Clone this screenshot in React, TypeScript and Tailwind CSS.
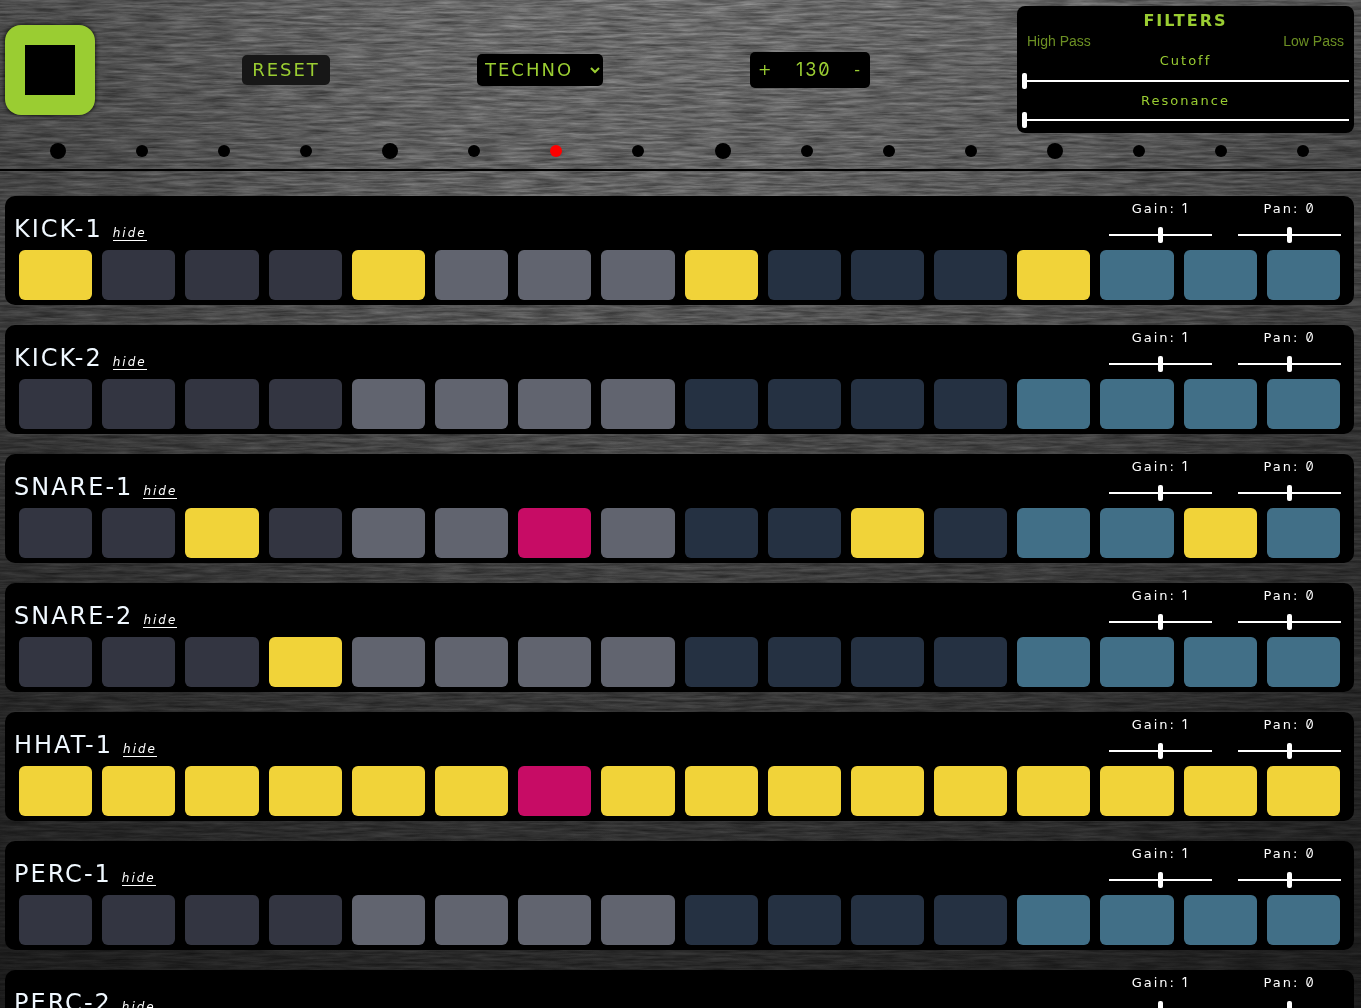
import { useState } from 'react';

type Track = { name: string; hits: number[] };

const STEPS = 16;
const CURRENT_STEP = 6;
const ALL_STEPS = Array.from({ length: STEPS }, (_, i) => i);

const TRACKS: Track[] = [
  { name: 'KICK-1', hits: [0, 4, 8, 12] },
  { name: 'KICK-2', hits: [] },
  { name: 'SNARE-1', hits: [2, 6, 10, 14] },
  { name: 'SNARE-2', hits: [3] },
  { name: 'HHAT-1', hits: ALL_STEPS },
  { name: 'PERC-1', hits: [] },
  { name: 'PERC-2', hits: [] },
];

const GROUP_COLORS = ['bg-[#333541]', 'bg-[#61646f]', 'bg-[#253142]', 'bg-[#416f87]'];

const SLIDER =
  'block h-0.5 w-full cursor-pointer appearance-none bg-white [&::-webkit-slider-thumb]:h-4 [&::-webkit-slider-thumb]:w-[5px] [&::-webkit-slider-thumb]:appearance-none [&::-webkit-slider-thumb]:rounded-xs [&::-webkit-slider-thumb]:bg-white';

/* Brushed metal: horizontally stretched noise, lit from the top centre. */
function BrushedMetal() {
  return (
    <svg className="fixed inset-0 -z-10 h-full w-full" aria-hidden="true">
      <defs>
        <filter id="grain" x="0" y="0" width="100%" height="100%" colorInterpolationFilters="sRGB">
          <feTurbulence type="fractalNoise" baseFrequency="0.03 0.36" numOctaves="4" seed="8" />
          <feColorMatrix values="0.4 0 0 0 0.22  0.4 0 0 0 0.22  0.4 0 0 0 0.22  0 0 0 0 1" />
        </filter>
        <linearGradient id="fade" x1="0" y1="0" x2="0" y2="1">
          <stop offset="0" stopColor="#000" stopOpacity="0" />
          <stop offset="0.2" stopColor="#000" stopOpacity="0.1" />
          <stop offset="0.45" stopColor="#000" stopOpacity="0.34" />
          <stop offset="0.7" stopColor="#000" stopOpacity="0.48" />
          <stop offset="1" stopColor="#000" stopOpacity="0.64" />
        </linearGradient>
        <linearGradient id="edges" x1="0" y1="0" x2="1" y2="0">
          <stop offset="0" stopColor="#000" stopOpacity="0.3" />
          <stop offset="0.3" stopColor="#000" stopOpacity="0.04" />
          <stop offset="0.5" stopColor="#000" stopOpacity="0" />
          <stop offset="0.75" stopColor="#000" stopOpacity="0.08" />
          <stop offset="1" stopColor="#000" stopOpacity="0.3" />
        </linearGradient>
      </defs>
      <rect width="100%" height="100%" filter="url(#grain)" />
      <rect width="100%" height="100%" fill="url(#fade)" />
      <rect width="100%" height="100%" fill="url(#edges)" />
    </svg>
  );
}

function FilterPanel() {
  return (
    <section className="w-[337px] rounded-lg bg-black px-[5px] pt-1.5 pb-3">
      <h2 className="text-center text-base leading-[18px] font-bold tracking-[2px]">FILTERS</h2>
      <div className="flex justify-between px-[5px] font-['Liberation_Sans',sans-serif] text-sm leading-[22px] text-[#6c9023]">
        <button type="button">High Pass</button>
        <button type="button">Low Pass</button>
      </div>
      <label className="block">
        <span className="block text-center text-[13px] leading-[18px] tracking-[2px]">Cutoff</span>
        <input type="range" min={0} max={100} defaultValue={0} className={`mt-2.5 ${SLIDER}`} />
      </label>
      <label className="mt-2.5 block">
        <span className="block text-center text-[13px] leading-[18px] tracking-[2px]">Resonance</span>
        <input type="range" min={0} max={100} defaultValue={0} className={`mt-[9px] ${SLIDER}`} />
      </label>
    </section>
  );
}

function Knob({ label, value, min, max }: { label: string; value: number; min: number; max: number }) {
  const [level, setLevel] = useState(value);
  return (
    <label className="block w-[129px] px-[13px] pt-1">
      <span className="block text-center text-[13px] leading-[18px] tracking-[2px]">
        {label}: <span className="font-[Inter,sans-serif] leading-none slashed-zero">{level}</span>
      </span>
      <input
        type="range"
        min={min}
        max={max}
        step={0.1}
        value={level}
        onChange={(e) => setLevel(Number(e.target.value))}
        className={`mt-4 ${SLIDER}`}
      />
    </label>
  );
}

function TrackCard({ name, hits }: Track) {
  const [active, setActive] = useState(hits);
  const toggle = (step: number) =>
    setActive((list) => (list.includes(step) ? list.filter((s) => s !== step) : [...list, step]));

  const padColor = (step: number) => {
    if (!active.includes(step)) return GROUP_COLORS[Math.floor(step / 4)];
    return step === CURRENT_STEP ? 'bg-[#c70c65]' : 'bg-[#f1d339]';
  };

  return (
    <section className="rounded-[10px] bg-black pb-[5px] text-white">
      <div className="flex h-[54px] justify-between">
        <div className="flex items-baseline gap-2.5 pt-[19px] pl-[9px]">
          <h2 className="text-[24px] leading-7 tracking-[2px] text-[aliceblue]">{name}</h2>
          <button type="button" className="border-b border-white text-xs leading-[14px] tracking-[2px] italic">
            hide
          </button>
        </div>
        <div className="flex">
          <Knob label="Gain" value={1} min={0} max={2} />
          <Knob label="Pan" value={0} min={-1} max={1} />
        </div>
      </div>
      <div className="grid grid-cols-16 gap-2.5 px-3.5">
        {ALL_STEPS.map((step) => (
          <button
            key={step}
            type="button"
            aria-label={`${name} step ${step + 1}`}
            aria-pressed={active.includes(step)}
            onClick={() => toggle(step)}
            className={`h-[50px] rounded-md ${padColor(step)}`}
          />
        ))}
      </div>
    </section>
  );
}

export default function App() {
  const [tempo, setTempo] = useState(130);
  return (
    <div className="relative isolate min-h-screen bg-[#333] pb-5 font-['DejaVu_Sans',sans-serif] text-[#9acd32]">
      <BrushedMetal />
      <header className="border-b-2 border-black pt-1.5 pb-2.5">
        <div className="flex items-center justify-between pr-[7px] pl-[5px]">
          <button
            type="button"
            aria-label="Stop"
            className="flex size-[90px] items-center justify-center rounded-2xl bg-[#9acd32] shadow-[0_0_5px_#000]"
          >
            <span className="size-[50px] bg-black" />
          </button>
          <button type="button" className="h-[30px] w-[88px] rounded-[5px] bg-[#171717] text-center text-lg leading-[30px] tracking-[2px]">
            RESET
          </button>
          <select
            aria-label="Kit"
            defaultValue="TECHNO"
            className="h-8 w-[126px] rounded-[5px] bg-black px-1 text-lg tracking-[2px]"
          >
            <option>TECHNO</option>
            <option>HOUSE</option>
          </select>
          <div className="flex h-9 w-[120px] items-center justify-between rounded-[5px] bg-black px-2 text-base tracking-[2px]">
            <button type="button" aria-label="Faster" onClick={() => setTempo(tempo + 1)}>
              +
            </button>
            <span className="font-[Inter,sans-serif] text-lg slashed-zero">{tempo}</span>
            <button type="button" aria-label="Slower" onClick={() => setTempo(tempo - 1)}>
              -
            </button>
          </div>
          <FilterPanel />
        </div>
        <div className="mt-2.5 flex h-4 items-center justify-around pr-[17px] pl-[15px]">
          {ALL_STEPS.map((step) => (
            <span
              key={step}
              className={`rounded-full ${step % 4 === 0 ? 'size-4' : 'size-3'} ${
                step === CURRENT_STEP ? 'bg-[#ff0000]' : 'bg-black'
              }`}
            />
          ))}
        </div>
      </header>
      <main className="flex flex-col gap-5 pt-[25px] pr-[7px] pl-[5px]">
        {TRACKS.map((track) => (
          <TrackCard key={track.name} {...track} />
        ))}
      </main>
    </div>
  );
}
